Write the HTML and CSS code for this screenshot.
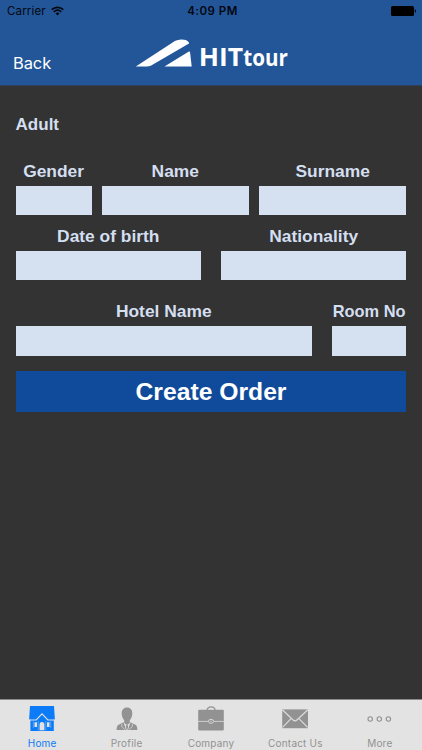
FILE: index.html
```html
<!DOCTYPE html>
<html lang="en">
<head>
    <meta charset="UTF-8">
    <meta name="viewport" content="width=device-width, initial-scale=1.0">
    <title>HITtour</title>
    <link rel="stylesheet" href="styles.css">
</head>
<body>
    <header class="header">
        <div class="status">
            <div class="carrier">
                <span>Carrier</span>
                <svg class="wifi" width="13" height="10" viewBox="0 0 13 10" fill="none" stroke="#02060f" stroke-width="1.7">
                    <path d="M0.7 3.6C4 0.5 9 0.5 12.3 3.6"/>
                    <path d="M2.8 5.8C5 3.8 8 3.8 10.2 5.8"/>
                    <path d="M6.5 9.4L4.5 7.3C5.6 6.3 7.4 6.3 8.5 7.3Z" fill="#02060f" stroke="none"/>
                </svg>
            </div>
            <span class="time">4:09 PM</span>
            <svg class="battery" width="26" height="10" viewBox="0 0 26 10" fill="#000">
                <rect x="0" y="0" width="23" height="10" rx="1.5"/>
                <path d="M23.8 3.2C25.5 3.5 25.5 6.5 23.8 6.8Z"/>
            </svg>
        </div>
        <div class="nav">
            <a class="back" href="#">Back</a>
            <svg class="logo" width="164" height="40" viewBox="0 0 164 40" fill="#fff">
                <path d="M0.8 28.4L38 4.3C42 1.2 50.5 0.2 53.8 4.2L54 5.4L16.2 27.4C14 28.6 12 28.4 0.8 28.4Z"/>
                <path d="M29.5 28.4L53.5 13.8C54.5 13.4 54.9 13.6 55.1 14.8L56.7 28.4Z"/>
                <text class="logo-text" x="63.8" y="28" font-size="25.5" textLength="44.4" lengthAdjust="spacingAndGlyphs">HIT</text>
                <text class="logo-text" x="108.2" y="28" font-size="23.5" textLength="44.6" lengthAdjust="spacingAndGlyphs">tour</text>
            </svg>
        </div>
    </header>

    <main class="content">
        <h1>Adult</h1>
        <form action="#" method="post">
            <div class="row row-name">
                <div class="form-group">
                    <label for="gender">Gender</label>
                    <input type="text" id="gender" name="gender">
                </div>
                <div class="form-group">
                    <label for="name">Name</label>
                    <input type="text" id="name" name="name">
                </div>
                <div class="form-group">
                    <label for="surname">Surname</label>
                    <input type="text" id="surname" name="surname">
                </div>
            </div>
            <div class="row row-birth">
                <div class="form-group">
                    <label for="birth">Date of birth</label>
                    <input type="text" id="birth" name="birth">
                </div>
                <div class="form-group">
                    <label for="nationality">Nationality</label>
                    <input type="text" id="nationality" name="nationality">
                </div>
            </div>
            <div class="row row-hotel">
                <div class="form-group">
                    <label for="hotel">Hotel Name</label>
                    <input type="text" id="hotel" name="hotel">
                </div>
                <div class="form-group">
                    <label class="small" for="room">Room No</label>
                    <input type="text" id="room" name="room">
                </div>
            </div>
            <button class="create" type="submit">Create Order</button>
        </form>
    </main>

    <nav class="tabs">
        <a class="tab active" href="#">
            <svg width="28" height="28" viewBox="0 0 28 28">
                <path fill="#0b7bf8" d="M2 1H26L26.9 14.6H25.8V26H2.4V14.6H1.1Z"/>
                <path fill="none" stroke="#e3e3e3" stroke-width="1.1" d="M1.3 15H8.2L14 8.8L19.8 15H26.5"/>
                <path fill="#e3e3e3" d="M6.5 17.3H9V22H6.5ZM19 17.3H21.5V22H19ZM11.6 25.2V19.5C11.6 16.2 16.4 16.2 16.4 19.5V25.2Z"/>
                <path fill="none" stroke="#8dbdf0" stroke-width="0.6" d="M10.2 16V25.6M17.8 16V25.6M5.3 16.5V23M22.7 16.5V23"/>
            </svg>
            <span>Home</span>
        </a>
        <a class="tab" href="#">
            <svg width="28" height="28" viewBox="0 0 28 28" fill="#929292">
                <path d="M14 2.6C17.5 2.6 19.3 5 19.3 8.4C19.3 11.3 18 13.6 16.8 15.2V18L14 20L11.2 18V15.2C10 13.6 8.7 11.3 8.7 8.4C8.7 5 10.5 2.6 14 2.6Z"/>
                <path d="M10.6 17.2L13 25H3.6C3.6 21.3 4.6 20 7 19ZM17.4 17.2L15 25H24.4C24.4 21.3 23.4 20 21 19ZM14 19.6L15.2 21L14.4 25H13.6L12.8 21Z"/>
                <path fill="none" stroke="#e3e3e3" stroke-width="0.7" d="M9 18.7L8.5 21.2L11.7 24.6M19 18.7L19.5 21.2L16.3 24.6"/>
            </svg>
            <span>Profile</span>
        </a>
        <a class="tab" href="#">
            <svg width="28" height="28" viewBox="0 0 28 28">
                <path fill="none" stroke="#929292" stroke-width="1.2" d="M9.8 6C9.8 0.6 18.2 0.6 18.2 6"/>
                <rect x="1.2" y="4.8" width="25.6" height="20.8" rx="1" fill="#929292"/>
                <path stroke="#d6d6d6" stroke-width="0.9" d="M1.2 16.4H26.8"/>
                <ellipse cx="14" cy="16.3" rx="2.6" ry="2" fill="#929292" stroke="#d6d6d6"/>
                <circle cx="14" cy="16.3" r="0.7" fill="#d6d6d6"/>
            </svg>
            <span>Company</span>
        </a>
        <a class="tab" href="#">
            <svg width="28" height="28" viewBox="0 0 28 28">
                <rect x="1.2" y="4.4" width="25.8" height="18.8" fill="#929292"/>
                <path fill="none" stroke="#dcdcdc" stroke-width="1.2" d="M1.4 4.8L11.8 14.8Q14 16.8 16.2 14.8L26.8 4.8M1.6 22.4L9.8 13.8M26.6 22.4L18.2 13.8"/>
            </svg>
            <span>Contact Us</span>
        </a>
        <a class="tab" href="#">
            <svg width="28" height="28" viewBox="0 0 28 28" fill="none" stroke="#929292" stroke-width="1.1">
                <circle cx="4.2" cy="14" r="2.2"/>
                <circle cx="13.3" cy="14" r="2.2"/>
                <circle cx="22.4" cy="14" r="2.2"/>
            </svg>
            <span>More</span>
        </a>
    </nav>
</body>
</html>
```
FILE: styles.css
```css
* {
    box-sizing: border-box;
}
body {
    margin: 0;
    height: 750px;
    display: flex;
    flex-direction: column;
    background-color: #333333;
    font-family: "Liberation Sans", Arial, sans-serif;
    overflow: hidden;
}
.header {
    height: 86px;
    background-color: #235699;
    border-bottom: 1px solid #2d415f;
    font-family: Inter, sans-serif;
}
.status {
    display: grid;
    grid-template-columns: 1fr auto 1fr;
    align-items: center;
    height: 22px;
    padding: 0 5px 0 7px;
    font-size: 11.5px;
    color: #02060f;
}
.carrier {
    display: flex;
    align-items: center;
    gap: 5px;
    letter-spacing: 0.15px;
}
.time {
    padding-left: 1px;
    font-weight: 600;
    letter-spacing: 0.5px;
}
.battery {
    justify-self: end;
}
.nav {
    display: flex;
    align-items: flex-start;
    height: 63px;
}
.back {
    width: 135px;
    padding: 32px 0 0 13px;
    font-size: 16.5px;
    line-height: 19px;
    letter-spacing: -0.1px;
    color: #fff;
    text-decoration: none;
}
.logo {
    margin-top: 16px;
}
.logo-text {
    font-family: "Open Sans", sans-serif;
    font-weight: 700;
}
.content {
    flex: 1;
    padding: 29px 15.6px 0;
    color: #d3dff0;
}
h1 {
    margin: 0 0 22px;
    font-size: 17px;
    line-height: 20px;
}
.row {
    display: grid;
}
.row-name {
    grid-template-columns: 76px 1fr 1fr;
    gap: 10px;
}
.row-birth {
    grid-template-columns: 1fr 1fr;
    gap: 20px;
    margin-top: 6.5px;
}
.row-hotel {
    grid-template-columns: 1fr 74.5px;
    gap: 20px;
    margin-top: 17px;
}
.form-group {
    display: flex;
    flex-direction: column;
    min-width: 0;
}
label {
    font-size: 17.4px;
    font-weight: bold;
    line-height: 29px;
    text-align: center;
    white-space: nowrap;
}
label.small {
    font-size: 16.4px;
}
input {
    width: 100%;
    height: 29px;
    padding: 0 6px;
    border: none;
    border-radius: 0;
    background-color: #d5e1f0;
}
.row-hotel input {
    height: 30px;
}
.create {
    display: block;
    width: 100%;
    height: 41.5px;
    margin-top: 15px;
    padding: 2px 0 0;
    border: none;
    background-color: #104b9b;
    color: #fff;
    font-family: inherit;
    font-size: 24.7px;
    font-weight: bold;
}
.tabs {
    display: grid;
    grid-template-columns: repeat(5, 1fr);
    height: 51px;
    background-color: #e3e3e3;
    border-top: 1px solid #8b8b8b;
}
.tab {
    display: flex;
    flex-direction: column;
    align-items: center;
    padding-top: 5px;
    font-family: Inter, sans-serif;
    font-size: 10px;
    letter-spacing: 0.2px;
    line-height: 12px;
    color: #929292;
    text-decoration: none;
}
.tab span {
    margin-top: 4px;
}
.tab.active {
    color: #0b7bf8;
}
```
